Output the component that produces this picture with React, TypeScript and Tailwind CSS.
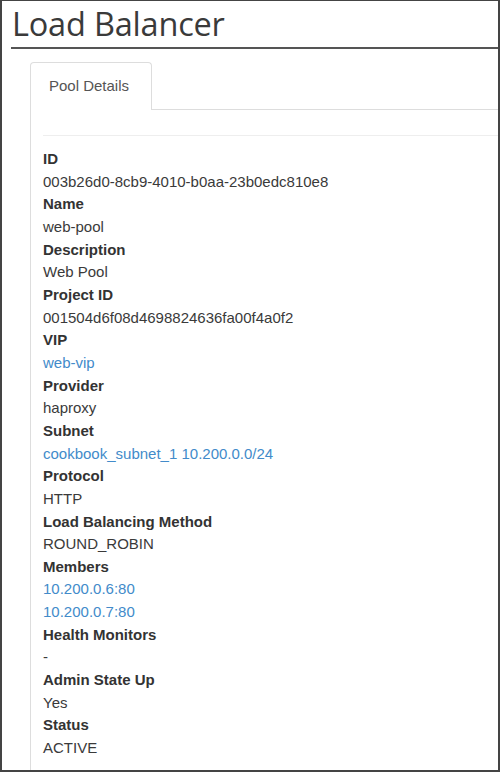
const rows: { label: string; values: string[]; link?: boolean }[] = [
  { label: "ID", values: ["003b26d0-8cb9-4010-b0aa-23b0edc810e8"] },
  { label: "Name", values: ["web-pool"] },
  { label: "Description", values: ["Web Pool"] },
  { label: "Project ID", values: ["001504d6f08d4698824636fa00f4a0f2"] },
  { label: "VIP", values: ["web-vip"], link: true },
  { label: "Provider", values: ["haproxy"] },
  { label: "Subnet", values: ["cookbook_subnet_1 10.200.0.0/24"], link: true },
  { label: "Protocol", values: ["HTTP"] },
  { label: "Load Balancing Method", values: ["ROUND_ROBIN"] },
  { label: "Members", values: ["10.200.0.6:80", "10.200.0.7:80"], link: true },
  { label: "Health Monitors", values: ["-"] },
  { label: "Admin State Up", values: ["Yes"] },
  { label: "Status", values: ["ACTIVE"] },
];

export default function App() {
  return (
    <div className="w-[500px] h-[772px] bg-white border-[#444] border-t border-l-2 border-r-2 border-b-2 flex flex-col overflow-hidden">
      <div className="ml-[9px] border-b-2 border-[#555] h-[48px] flex items-end">
        <h1 className="text-[32.5px] leading-[47px] text-[#3a3a3a] tracking-[-0.2px] pl-[1px] font-['Open_Sans',sans-serif]">
          Load Balancer
        </h1>
      </div>

      <div className="ml-[28px] mt-[13px] flex-1 flex flex-col font-['Liberation_Sans',Arial,sans-serif] text-[15px] text-[#333]">
        <div className="flex">
          <div className="w-[122px] h-[48px] border border-[#ddd] border-b-0 rounded-t-[4px] flex items-center pl-[18px] text-[#555]">
            Pool Details
          </div>
          <div className="flex-1 border-b border-[#ddd]" />
        </div>

        <div className="flex-1 border-l border-[#ddd] pl-[12px]">
          <div className="mt-[25px] border-t border-[#eee]" />
          <dl className="mt-[12px] leading-[22.65px]">
            {rows.map((r) => (
              <div key={r.label}>
                <dt className="font-bold">{r.label}</dt>
                {r.values.map((v) => (
                  <dd key={v} className={r.link ? "text-[#428bca]" : "text-[#3a3a3a]"}>
                    {v}
                  </dd>
                ))}
              </div>
            ))}
          </dl>
        </div>
      </div>
    </div>
  );
}
